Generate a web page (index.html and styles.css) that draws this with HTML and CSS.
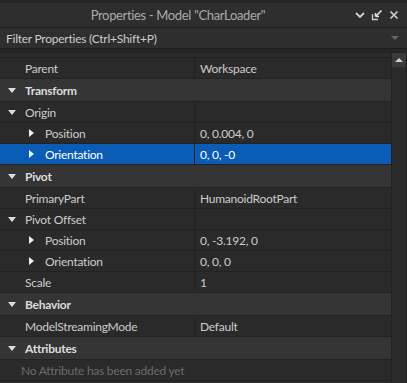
FILE: index.html
```html
<!DOCTYPE html>
<html lang="en">
<head>
    <meta charset="UTF-8">
    <title>Properties</title>
    <link rel="stylesheet" href="styles.css">
</head>
<body>

<div class="panel">
    <div class="titlebar">
        <span class="title">Properties - Model "CharLoader"</span>
        <div class="title-btns">
            <svg width="12" height="12" viewBox="0 0 12 12"><path d="M2 4 L6 8 L10 4" stroke="#d0d0d0" stroke-width="1.8" fill="none"/></svg>
            <svg width="12" height="12" viewBox="0 0 12 12"><path d="M1.5 5 V10.5 H7" stroke="#d0d0d0" stroke-width="1.3" fill="none"/><path d="M4.5 7.5 L10.5 1.5 M4.5 7.5 V4 M4.5 7.5 H8" stroke="#e0e0e0" stroke-width="1.6" fill="none"/></svg>
            <svg width="12" height="12" viewBox="0 0 12 12"><path d="M2.5 2.5 L9.5 9.5 M9.5 2.5 L2.5 9.5" stroke="#d0d0d0" stroke-width="1.6" fill="none"/></svg>
        </div>
    </div>
    <div class="filter">
        <span>Filter Properties (Ctrl+Shift+P)</span>
        <span class="filter-arrow"></span>
    </div>

    <div class="body">
        <div class="grid">
            <div class="row top"><div class="name"></div><div class="value"></div></div>
            <div class="row"><div class="name">Parent</div><div class="value">Workspace</div></div>
            <div class="row cat"><span class="tri down"></span>Transform</div>
            <div class="row"><div class="name group"><span class="tri down"></span>Origin</div><div class="value"></div></div>
            <div class="row"><div class="name sub"><span class="tri right"></span>Position</div><div class="value">0, 0.004, 0</div></div>
            <div class="row selected"><div class="name sub"><span class="tri right"></span>Orientation</div><div class="value">0, 0, -0</div></div>
            <div class="row cat"><span class="tri down"></span>Pivot</div>
            <div class="row"><div class="name">PrimaryPart</div><div class="value">HumanoidRootPart</div></div>
            <div class="row"><div class="name group"><span class="tri down"></span>Pivot Offset</div><div class="value"></div></div>
            <div class="row"><div class="name sub"><span class="tri right"></span>Position</div><div class="value">0, -3.192, 0</div></div>
            <div class="row"><div class="name sub"><span class="tri right"></span>Orientation</div><div class="value">0, 0, 0</div></div>
            <div class="row"><div class="name">Scale</div><div class="value">1</div></div>
            <div class="row cat"><span class="tri down"></span>Behavior</div>
            <div class="row"><div class="name">ModelStreamingMode</div><div class="value">Default</div></div>
            <div class="row cat"><span class="tri down"></span>Attributes</div>
            <div class="row empty">No Attribute has been added yet</div>
        </div>
        <div class="scrollbar">
            <div class="scroll-up"><span></span></div>
        </div>
    </div>
</div>

</body>
</html>
```

FILE: styles.css
```css
body {
    margin: 0;
    background-color: #262626;
    font-family: Lato, "Noto Sans", sans-serif;
    font-size: 12px;
    letter-spacing: -0.25px;
    color: #cccccc;
}
.panel {
    width: 407px;
    height: 383px;
    overflow: hidden;
    border-top: 3px solid #262626;
    box-sizing: border-box;
}
.titlebar {
    height: 24px;
    background-color: #2e2e2e;
    border-bottom: 1px solid #1c1c1c;
    display: flex;
    align-items: center;
}
.title {
    width: 356px;
    text-align: center;
    font-size: 13px;
    letter-spacing: -0.35px;
    color: #aaaaaa;
}
.title-btns {
    display: flex;
    gap: 5px;
    margin-left: -2px;
}
.filter {
    height: 20px;
    background-color: #2e2e2e;
    border-bottom: 1px solid #1c1c1c;
    display: flex;
    align-items: center;
    justify-content: space-between;
    padding: 0 6px;
    color: #cccccc;
}
.filter-arrow {
    width: 0;
    height: 0;
    border-left: 4px solid transparent;
    border-right: 4px solid transparent;
    border-top: 4px solid #666666;
    margin-right: 2px;
}
.body {
    margin-top: 3px;
    display: flex;
    background-color: #2a2a2a;
    border-top: 1px solid #222222;
}
.grid {
    width: 391px;
}
.row {
    display: grid;
    grid-template-columns: 195px 1fr;
    height: 20px;
    border-bottom: 1px solid #222222;
    background-color: #2a2a2a;
}
.row.top {
    height: 4px;
}
.name {
    border-right: 1px solid #222222;
    padding-left: 25px;
    display: flex;
    align-items: center;
    position: relative;
}
.name.sub {
    padding-left: 45px;
}
.value {
    padding-left: 5px;
    display: flex;
    align-items: center;
}
.row.cat {
    display: flex;
    align-items: center;
    height: 22px;
    background-color: #353535;
    padding-left: 25px;
    font-weight: bold;
    color: #dddddd;
    position: relative;
}
.row.selected {
    background-color: #0b5cb5;
    color: #ffffff;
}
.row.empty {
    display: flex;
    align-items: center;
    padding-left: 21px;
    color: #6a6a6a;
}
.tri {
    position: absolute;
    width: 0;
    height: 0;
}
.tri.down {
    left: 8px;
    top: 50%;
    margin-top: -2px;
    border-left: 4px solid transparent;
    border-right: 4px solid transparent;
    border-top: 5px solid #dddddd;
}
.tri.right {
    left: 29px;
    top: 50%;
    margin-top: -4px;
    border-top: 4px solid transparent;
    border-bottom: 4px solid transparent;
    border-left: 5px solid #eeeeee;
}
.scrollbar {
    width: 14px;
    background-color: #2b2b2b;
    border-left: 1px solid #222222;
    border-right: 1px solid #1e1e1e;
    height: 340px;
}
.scroll-up {
    height: 14px;
    background-color: #3a3a3a;
    display: flex;
    align-items: center;
    justify-content: center;
}
.scroll-up span {
    width: 0;
    height: 0;
    border-left: 4px solid transparent;
    border-right: 4px solid transparent;
    border-bottom: 4px solid #d0d0d0;
}
```
